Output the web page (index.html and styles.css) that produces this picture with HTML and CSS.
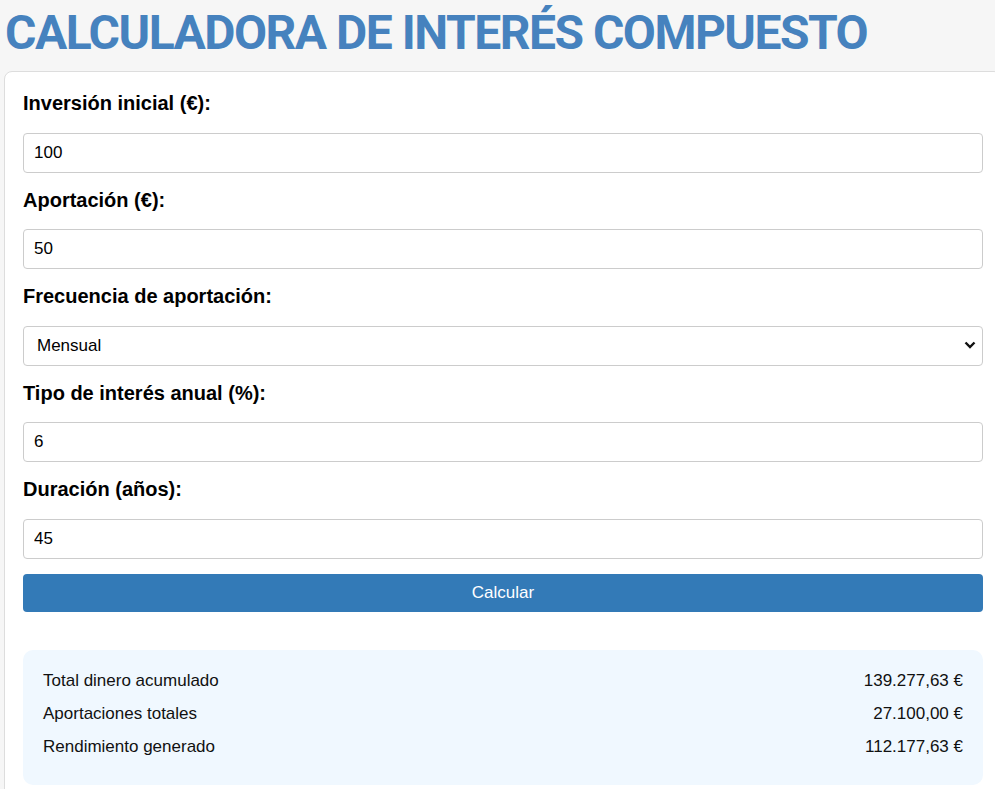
FILE: index.html
```html
<!DOCTYPE html>
<html lang="es">
<head>
    <meta charset="UTF-8">
    <meta name="viewport" content="width=device-width, initial-scale=1.0">
    <title>Calculadora de interés compuesto</title>
    <link rel="stylesheet" href="styles.css">
</head>
<body>
    <h1 class="title">CALCULADORA DE INTERÉS COMPUESTO</h1>
    <div class="card">
        <form id="form">
            <label for="inicial">Inversión inicial (€):</label>
            <input type="number" id="inicial" value="100">

            <label for="aportacion">Aportación (€):</label>
            <input type="number" id="aportacion" value="50">

            <label for="frecuencia">Frecuencia de aportación:</label>
            <div class="select-wrap">
                <select id="frecuencia">
                    <option value="12" selected>Mensual</option>
                    <option value="4">Trimestral</option>
                    <option value="2">Semestral</option>
                    <option value="1">Anual</option>
                </select>
                <svg class="arrow" width="12" height="8" viewBox="0 0 12 8">
                    <polyline points="1.5,1.5 6,6 10.5,1.5" fill="none" stroke="#111" stroke-width="2.4"/>
                </svg>
            </div>

            <label for="interes">Tipo de interés anual (%):</label>
            <input type="number" id="interes" value="6">

            <label for="duracion">Duración (años):</label>
            <input type="number" id="duracion" value="45" class="last">

            <button type="submit" class="btn">Calcular</button>
        </form>

        <div class="result">
            <div class="row"><span>Total dinero acumulado</span><span id="total">139.277,63 €</span></div>
            <div class="row"><span>Aportaciones totales</span><span id="aportado">27.100,00 €</span></div>
            <div class="row"><span>Rendimiento generado</span><span id="rendimiento">112.177,63 €</span></div>
        </div>
    </div>
    <script>
        // formato español con dos decimales
        function euros(n) {
            return n.toLocaleString('es-ES', {minimumFractionDigits: 2, maximumFractionDigits: 2, useGrouping: 'always'}) + ' €';
        }

        document.getElementById('form').onsubmit = function (e) {
            e.preventDefault();
            const inicial = +document.getElementById('inicial').value;
            const aporte = +document.getElementById('aportacion').value;
            const freq = +document.getElementById('frecuencia').value;
            const tasa = +document.getElementById('interes').value / 100;
            const anos = +document.getElementById('duracion').value;

            // capitalización mensual, aportación al final de cada periodo
            let saldo = inicial;
            let aportado = inicial;
            const meses = anos * 12;
            for (let m = 1; m <= meses; m++) {
                saldo *= 1 + tasa / 12;
                if (m % (12 / freq) === 0) {
                    saldo += aporte;
                    aportado += aporte;
                }
            }
            document.getElementById('total').textContent = euros(saldo);
            document.getElementById('aportado').textContent = euros(aportado);
            document.getElementById('rendimiento').textContent = euros(saldo - aportado);
        }
    </script>
</body>
</html>
```

FILE: styles.css
```css
*{
    margin: 0;
    padding: 0;
    box-sizing: border-box;
}
html{
    overflow: hidden;
}
body{
    background-color: #f6f6f6;
    font-family: "Liberation Sans", Arial, sans-serif;
    font-size: 17px;
    color: #000;
}

.title{
    padding-left: 5px;
    font-family: Roboto, "Liberation Sans", sans-serif;
    font-size: 48px;
    font-weight: 700;
    letter-spacing: -1.5px;
    line-height: 66px;
    margin-bottom: 5px;
    color: #4682be;
    white-space: nowrap;
}

.card{
    box-sizing: content-box;
    width: 960px;
    margin-left: 4px;
    padding: 21px 18px 20px;
    background-color: #fff;
    border: 1px solid #ddd;
    border-radius: 8px;
}

label{
    display: block;
    font-size: 20px;
    font-weight: 700;
    line-height: 21.5px;
    margin-bottom: 18px;
}

input,
select{
    display: block;
    width: 100%;
    height: 40px;
    padding: 0 10px;
    border: 1px solid #ccc;
    border-radius: 4px;
    background-color: #fff;
    font-family: inherit;
    font-size: 17px;
    color: #000;
    margin-bottom: 17px;
}
input.last{
    margin-bottom: 15px;
}

.select-wrap{
    position: relative;
}
.select-wrap select{
    appearance: none;
    padding-left: 13px;
}
.select-wrap .arrow{
    position: absolute;
    right: 7px;
    top: 15px;
    pointer-events: none;
}

.btn{
    display: block;
    width: 100%;
    height: 38px;
    border: none;
    border-radius: 4px;
    background-color: #337ab7;
    color: #fff;
    font-family: inherit;
    font-size: 17px;
    cursor: pointer;
}

.result{
    margin-top: 38px;
    padding: 19px 20px 17px;
    background-color: #f0f8ff;
    border-radius: 10px;
}
.result .row{
    display: flex;
    justify-content: space-between;
    line-height: 23px;
    margin-bottom: 10px;
    color: #111;
}
```
